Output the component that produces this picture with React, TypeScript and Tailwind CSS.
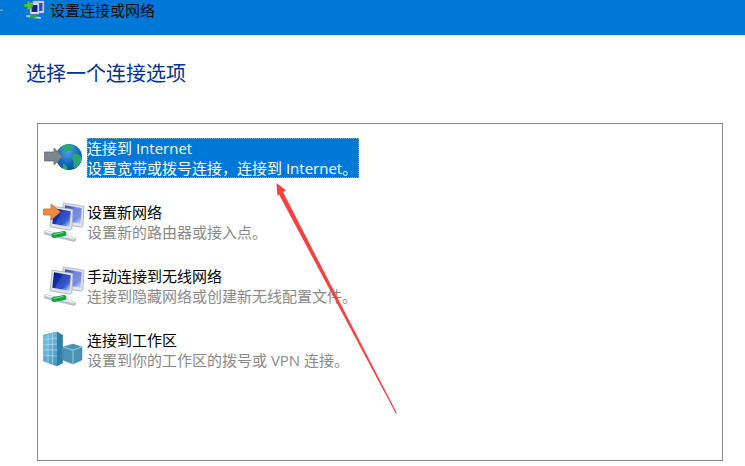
const FONT = "font-['Open_Sans','Noto_Sans_CJK_SC',sans-serif]";

function Monitor({ id, x, y, back }: { id: string; x: number; y: number; back?: boolean }) {
  return (
    <g transform={`translate(${x} ${y}) scale(1.15)`}>
      <defs>
        <linearGradient id={id} x1="0" y1="0" x2="1" y2="1">
          <stop offset="0" stopColor={back ? "#2f46c0" : "#041488"} />
          <stop offset="0.65" stopColor={back ? "#5f78de" : "#1a3fc6"} />
          <stop offset="1" stopColor="#d6def8" />
        </linearGradient>
      </defs>
      <path d="M2 0 L20 3 L19 20 L17 21 L0 18 Z" fill="#dfe3ea" stroke="#a3abb8" strokeWidth="0.7" />
      <path d="M3.5 2 L18 4.5 L17 18 L2 15.5 Z" fill={`url(#${id})`} />
      <path d="M11 3.5 L18 4.5 L17.6 9 L8 16.5 L4 16 Z" fill="#ffffff" opacity={back ? 0.18 : 0.12} />
    </g>
  );
}

function Cable() {
  return (
    <g>
      <path d="M3 32.5 L31 39.5" stroke="#bcc3c6" strokeWidth="4.5" strokeLinecap="round" />
      <path d="M3 31.5 L31 38.5" stroke="#f1f3f4" strokeWidth="1.5" strokeLinecap="round" />
      <path d="M11 35.5 L21 33.5" stroke="#12a243" strokeWidth="5" strokeLinecap="round" />
      <path d="M11 34.5 L20 32.5" stroke="#78e094" strokeWidth="1.2" strokeLinecap="round" />
    </g>
  );
}

function NetworkIcon({ id, orange }: { id: string; orange?: boolean }) {
  return (
    <svg width="44" height="44" viewBox="0 0 44 44" className="block shrink-0">
      <Monitor id={`${id}b`} x={18} y={3} back />
      <Monitor id={`${id}a`} x={7} y={6} />
      <Cable />
      {orange && (
        <path d="M0.5 9 H8 V4 L17.5 12 L8 20 V15 H0.5 Z" fill="#f08a3c" stroke="#c9601c" strokeWidth="0.7" />
      )}
    </svg>
  );
}

function GlobeIcon() {
  return (
    <svg width="44" height="40" viewBox="0 0 44 40" className="block shrink-0">
      <defs>
        <radialGradient id="globe" cx="0.45" cy="0.3" r="0.8">
          <stop offset="0" stopColor="#4f9fe2" />
          <stop offset="0.6" stopColor="#0f66b8" />
          <stop offset="1" stopColor="#0a3f80" />
        </radialGradient>
      </defs>
      <circle cx="26" cy="19" r="13" fill="url(#globe)" />
      <path d="M20 7.5 C24 5.5 29 6.5 32 9 C29 12 26 11.5 24 14 C21 15 18 12 20 7.5 Z" fill="#2aa777" />
      <path d="M30 16 C33 15 37 16 39 20 C38 26 34 30 31 30 C30 26 32 24 29 21 Z" fill="#2aa777" />
      <path d="M20 26 C23 26 25 29 24 32 C21 31.5 19 30 20 26 Z" fill="#2aa777" />
      <path d="M1.5 14 H11 V10 L20 18.5 L11 27 V23 H1.5 Z" fill="#7d858f" stroke="#5c636c" strokeWidth="0.7" />
    </svg>
  );
}

function BuildingIcon() {
  return (
    <svg width="44" height="44" viewBox="0 0 44 44" className="block shrink-0">
      <defs>
        <linearGradient id="bd" x1="0" y1="0" x2="1" y2="1">
          <stop offset="0" stopColor="#7cc4e6" />
          <stop offset="1" stopColor="#3f8fbb" />
        </linearGradient>
      </defs>
      <path d="M20 19 L30 16 L39 19 L39 32 L30 36 L20 32 Z" fill="#4a93b5" stroke="#3d7fa6" strokeWidth="0.5" />
      <path d="M20 19 L30 22 L39 19 M30 22 V36" stroke="#bfe0ee" strokeWidth="0.7" fill="none" />
      <path d="M0.5 7 L14 4 L19.5 7 L19.5 35 L14 38 L0.5 33 Z" fill="url(#bd)" stroke="#3d7fa6" strokeWidth="0.5" />
      <path d="M14 4 L19.5 7 L19.5 35 L14 38 Z" fill="#2f7ea8" />
      <path d="M0.5 12 L14 10 M0.5 17 L14 16 M0.5 22 L14 22 M0.5 27 L14 28 M5 6 V35 M9.5 5 V36" stroke="#bfe3f4" strokeWidth="0.6" />
    </svg>
  );
}

function TitleIcon() {
  return (
    <svg width="22" height="20" viewBox="0 0 22 20" className="block shrink-0">
      <path d="M9 1 H20 V13 H9 Z" fill="#d8def0" stroke="#8a94ad" strokeWidth="0.6" />
      <path d="M10.5 3 H18.5 V11 H10.5 Z" fill="#3148b8" />
      <path d="M6 3 H15 V14 H6 Z" fill="#e4e8f3" stroke="#8a94ad" strokeWidth="0.6" />
      <path d="M7.5 5 H13.5 V12 H7.5 Z" fill="#10208c" />
      <path d="M0 4 H3 V1 H6 V4 H9 V7 H6 V10 H3 V7 H0 Z" fill="#45c830" stroke="#1c7a16" strokeWidth="0.5" />
      <path d="M3 16 L16 18" stroke="#b9c4c9" strokeWidth="2" strokeLinecap="round" />
      <path d="M7 17 L12 16" stroke="#1ba84a" strokeWidth="2.4" strokeLinecap="round" />
    </svg>
  );
}

function Row({ icon, title, desc }: { icon: React.ReactNode; title: string; desc: string }) {
  return (
    <div className="flex h-10 items-center">
      <div className="flex w-[49px] shrink-0 justify-start pl-[5px]">{icon}</div>
      <div className="text-[15px] leading-[20px]">
        <div className="text-black">{title}</div>
        <div className="text-[#8a8a8a]">{desc}</div>
      </div>
    </div>
  );
}

export default function App() {
  return (
    <div className={`relative h-[466px] w-[745px] overflow-hidden bg-white ${FONT}`}>
      <header className="flex h-[35px] items-start bg-[#0078d7] pl-[24px]">
        <TitleIcon />
        <span className="ml-[4px] text-[15px] leading-[20px] text-[#0a0a0a]">设置连接或网络</span>
      </header>
      <h1 className="ml-[26px] mt-[25px] text-[20px] font-normal leading-[28px] text-[#003399]">选择一个连接选项</h1>
      <section className="ml-[37px] mt-[35px] h-[338px] w-[686px] border border-[#8a8a90] pt-[14px]">
        <div className="flex flex-col gap-[24px]">
          <div className="flex h-10 items-center">
            <div className="flex w-[49px] shrink-0 justify-start pl-[5px]">
              <GlobeIcon />
            </div>
            <div className="h-10 w-[272px] whitespace-nowrap border border-dotted border-[#7fa8c0] bg-[#0078d7] text-[15px] leading-[20px] text-white">
              <div className="-ml-px -mt-px">连接到 Internet</div>
              <div className="-ml-px">设置宽带或拨号连接，连接到 Internet。</div>
            </div>
          </div>
          <Row icon={<NetworkIcon id="n1" orange />} title="设置新网络" desc="设置新的路由器或接入点。" />
          <Row icon={<NetworkIcon id="n2" />} title="手动连接到无线网络" desc="连接到隐藏网络或创建新无线配置文件。" />
          <Row icon={<BuildingIcon />} title="连接到工作区" desc="设置到你的工作区的拨号或 VPN 连接。" />
        </div>
      </section>
      <svg className="pointer-events-none absolute left-0 top-0" width="745" height="466" viewBox="0 0 745 466">
        <path d="M0 9.5 H3 V11 H0 Z" fill="#7f9fbd" />
        <path d="M276.5 183 L286 190.5 L283 192 L396.8 413 L395.8 413.5 L279 194.5 L277.5 196 Z" fill="#f93f3f" />
      </svg>
    </div>
  );
}
